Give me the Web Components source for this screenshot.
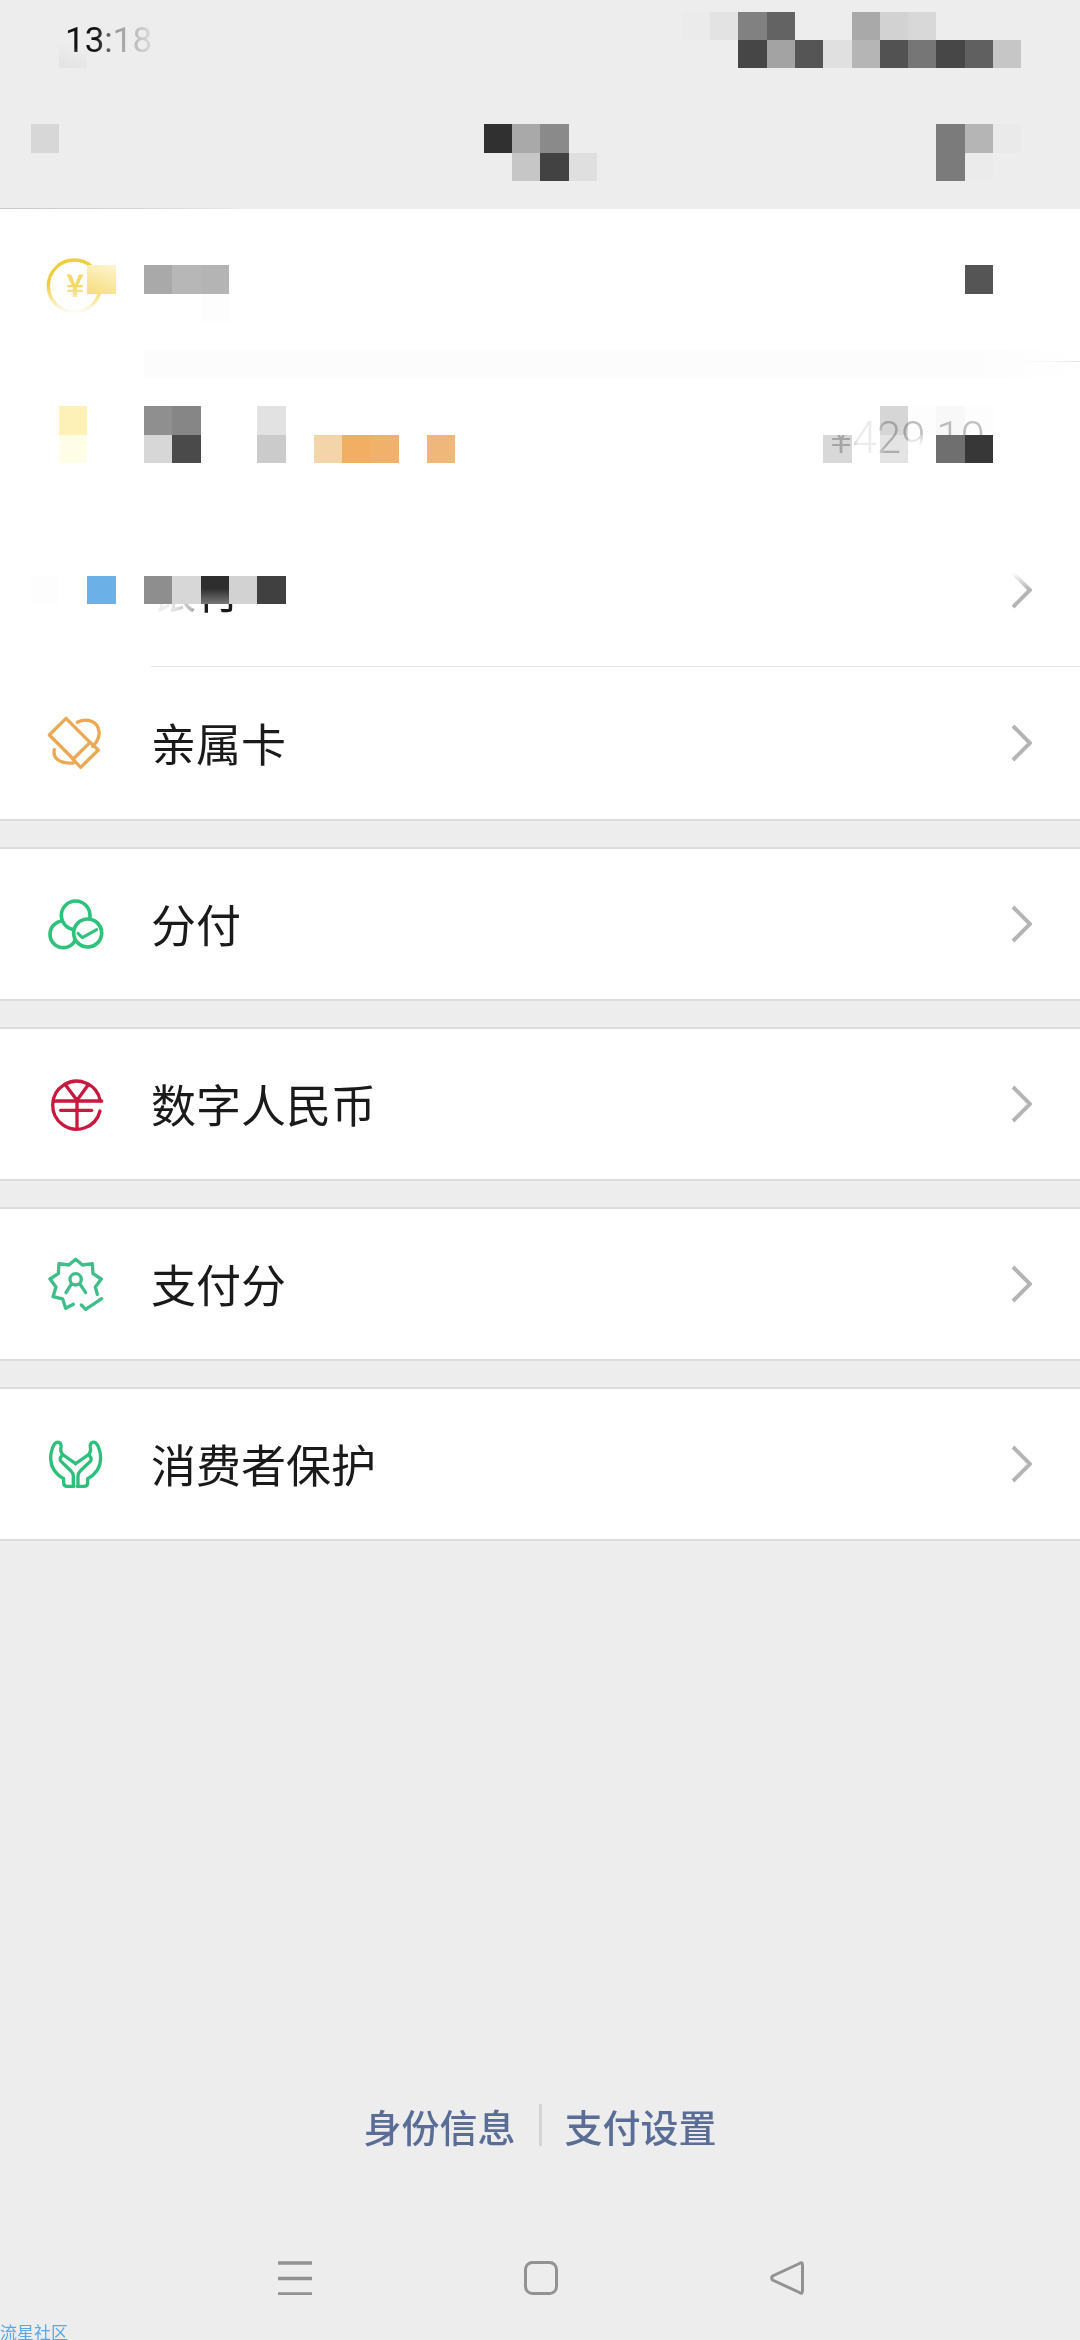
<!DOCTYPE html>
<html lang="zh">
<head>
<meta charset="utf-8">
<title>服务</title>
<style>
  html, body { margin: 0; padding: 0; }
  body {
    width: 1080px;
    height: 2340px;
    overflow: hidden;
    position: relative;
    display: flex;
    flex-direction: column;
    background: #ededed;
    font-family: "Noto Sans CJK SC", "Noto Sans", sans-serif;
  }
  svg.ic { display: block; width: 66.67px; height: 66.67px; fill: none; stroke-linecap: round; stroke-linejoin: round; }
  .coin { -webkit-mask-image: linear-gradient(#000 50%, transparent 92%); mask-image: linear-gradient(#000 50%, transparent 92%); }
  .ghost {
    display: inline-block;
    clip-path: inset(33px 0 0 0);
    -webkit-mask-image: linear-gradient(90deg, rgba(0,0,0,.08) 20%, rgba(0,0,0,.3) 45%, #000 60%);
    mask-image: linear-gradient(90deg, rgba(0,0,0,.08) 20%, rgba(0,0,0,.3) 45%, #000 60%);
  }
  .amount {
    display: inline-block;
    -webkit-mask-image: linear-gradient(90deg, #000 14%, rgba(0,0,0,.3) 18%, rgba(0,0,0,.35) 30%, #000 36%);
    mask-image: linear-gradient(90deg, #000 14%, rgba(0,0,0,.3) 18%, rgba(0,0,0,.35) 30%, #000 36%);
  }
</style>
</head>
<body>
  <status-head time="13:18"></status-head>

  <wallet-list>
    <wallet-row sep="fade-in">
      <svg slot="icon" class="ic coin" viewBox="60 60 200 200">
        <circle cx="163" cy="162" r="78" stroke="#efcf3f" stroke-width="10"/>
        <text x="165" y="195" text-anchor="middle" font-family="Noto Sans CJK SC, sans-serif" font-weight="700" font-size="92" fill="#f2d96a">¥</text>
      </svg>
    </wallet-row>
    <wallet-row>
      <span slot="value" class="amount">¥429.10</span>
    </wallet-row>
    <wallet-row sep="full" chevron="fade">
      <span slot="label" class="ghost">银行</span>
    </wallet-row>
    <wallet-row chevron="on">
      <svg slot="icon" class="ic" viewBox="60 60 200 200" stroke="#eca955" stroke-width="10">
        <path d="M138 88 L88 138 L160 210 L210 160 Z"/>
        <path d="M210 160 L235 183 L182 235 L160 212"/>
        <path d="M172 100 C195 88 225 92 235 118 C243 140 232 158 218 172"/>
        <path d="M103 182 C98 205 115 225 160 222"/>
      </svg>
      <span slot="label">亲属卡</span>
    </wallet-row>
  </wallet-list>

  <wallet-list gap>
    <wallet-row chevron="on" single>
      <svg slot="icon" class="ic" viewBox="60 60 200 200" stroke="#2fc27c" stroke-width="11">
        <circle cx="130" cy="190" r="40" fill="#fff"/>
        <circle cx="167" cy="133" r="43" fill="#fff"/>
        <circle cx="203" cy="186" r="42" fill="#fff"/>
        <path d="M174 187 L187 200 L230 176" stroke-width="9"/>
      </svg>
      <span slot="label">分付</span>
    </wallet-row>
  </wallet-list>

  <wallet-list gap>
    <wallet-row chevron="on" single>
      <svg slot="icon" class="ic" viewBox="60 60 200 200" stroke="#c8193e" stroke-width="10">
        <path d="M240 180 A72 72 0 1 1 241 150"/>
        <path d="M135 100 L171 148 L206 100"/>
        <path d="M100 150 H245"/>
        <path d="M122 178 H215"/>
        <path d="M171 150 V232"/>
      </svg>
      <span slot="label">数字人民币</span>
    </wallet-row>
  </wallet-list>

  <wallet-list gap>
    <wallet-row chevron="on" single>
      <svg slot="icon" class="ic" viewBox="60 60 200 200" stroke="#3fbd8a" stroke-width="10">
        <path d="M232 190 L226 168 L244 144 L219 128 L217 98 L187.5 102 L167 85 L146.5 102 L117 98 L115 128 L90 144 L108 168 L99 197 L128 204 L137 232 L160 220"/>
        <path d="M184 222 L197 235 L245 203"/>
        <circle cx="167" cy="145" r="17"/>
        <path d="M153 161 L138 185"/>
        <path d="M181 161 L197 185"/>
      </svg>
      <span slot="label">支付分</span>
    </wallet-row>
  </wallet-list>

  <wallet-list gap>
    <wallet-row chevron="on" single>
      <svg slot="icon" class="ic" viewBox="60 60 200 200" stroke="#2cc07c" stroke-width="10">
        <path d="M162 226 H142 Q131 226 131 215 V203 C108 190 92 172 92 140 C92 122 100 100 108 95 C116 91 125 96 123 108 C121 118 122 126 130 132 L167 158"/>
        <path d="M128 132 C120 138 118 146 124 152 L153 180 Q160 186 160 196 V226"/>
        <g transform="translate(334 0) scale(-1 1)">
          <path d="M162 226 H142 Q131 226 131 215 V203 C108 190 92 172 92 140 C92 122 100 100 108 95 C116 91 125 96 123 108 C121 118 122 126 130 132 L167 158"/>
          <path d="M128 132 C120 138 118 146 124 152 L153 180 Q160 186 160 196 V226"/>
        </g>
      </svg>
      <span slot="label">消费者保护</span>
    </wallet-row>
  </wallet-list>

  <foot-links>
    <span>身份信息</span>
    <span>支付设置</span>
  </foot-links>
  <nav-bar></nav-bar>

  <pixel-mosaic></pixel-mosaic>
  <water-mark>流星社区</water-mark>

<script>
'use strict';

class StatusHead extends HTMLElement {
  constructor() {
    super();
    this.attachShadow({ mode: 'open' });
    this.shadowRoot.innerHTML = `
      <style>
        :host { display: block; height: 209px; flex: none; padding: 19px 0 0 65px; box-sizing: border-box; position: relative; }
        .time {
          font: 400 35px/44px Roboto, sans-serif;
          color: #111;
          display: inline-block;
          -webkit-mask-image: linear-gradient(90deg, #000 35%, rgba(0,0,0,.35) 62%, rgba(0,0,0,.08) 100%);
          mask-image: linear-gradient(90deg, #000 35%, rgba(0,0,0,.35) 62%, rgba(0,0,0,.08) 100%);
        }
        .edge { position: absolute; left: 0; right: 0; bottom: 0; height: 1.5px; background: linear-gradient(90deg, #c8c8c8, #d8d8d8 15%, transparent 23%); }
      </style>
      <span class="time"></span><div class="edge"></div>`;
  }

  connectedCallback() {
    this.shadowRoot.querySelector('.time').textContent = this.getAttribute('time');
  }
}

class WalletList extends HTMLElement {
  constructor() {
    super();
    this.attachShadow({ mode: 'open' });
    this.shadowRoot.innerHTML = `
      <style>
        :host { display: block; flex: none; background: #fff; border-bottom: 2px solid #dcdcdc; }
        :host([gap]) { margin-top: 26px; border-top: 2px solid #dcdcdc; }
      </style>
      <slot></slot>`;
  }
}

class WalletRow extends HTMLElement {
  constructor() {
    super();
    this.attachShadow({ mode: 'open' });
    this.shadowRoot.innerHTML = `
      <style>
        :host { display: grid; grid-template-columns: 151px 1fr; height: 152.5px; }
        :host([single]) { height: 150px; }
        .icon { display: flex; align-items: center; padding-left: 40px; }
        .body {
          display: flex;
          align-items: center;
          justify-content: space-between;
          padding-right: 48px;
          box-sizing: border-box;
          min-width: 0;
        }
        :host([sep="full"]) .body { border-bottom: 1.5px solid #e6e6e6; }
        :host([sep="fade-in"]) .body {
          border-bottom: 1.5px solid;
          border-image: linear-gradient(90deg, transparent 93%, #e4e4e4 100%) 1;
        }
        .label { font-size: 45px; line-height: 60px; color: #1a1a1a; }
        .end { display: flex; align-items: center; }
        .value { font: 300 44px/60px Roboto, sans-serif; color: #c2c2c2; margin-right: 47px; }
        svg { display: none; width: 21px; height: 38px; fill: none; stroke: #b4b4b4; stroke-width: 4; }
        :host([chevron]) svg { display: block; }
        :host([chevron]) .value { display: none; }
        :host([chevron="fade"]) svg {
          -webkit-mask-image: linear-gradient(transparent 5%, #000 48%);
          mask-image: linear-gradient(transparent 5%, #000 48%);
        }
      </style>
      <div class="icon"><slot name="icon"></slot></div>
      <div class="body">
        <div class="label"><slot name="label"></slot></div>
        <div class="end">
          <div class="value"><slot name="value"></slot></div>
          <svg viewBox="0 0 21 38"><path d="M2 2 L19 19 L2 36"/></svg>
        </div>
      </div>`;
  }
}

class FootLinks extends HTMLElement {
  constructor() {
    super();
    this.attachShadow({ mode: 'open' });
    this.shadowRoot.innerHTML = `
      <style>
        :host {
          display: flex;
          flex: none;
          margin-top: auto;
          height: 174px;
          padding-bottom: 4px;
          align-items: center;
          justify-content: center;
          gap: 23px;
          font-size: 38px;
          font-weight: 500;
          color: #5a6d96;
        }
        i { display: block; width: 3px; height: 42px; background: #d4d4d4; }
      </style>
      <slot name="a"></slot><i></i><slot name="b"></slot>`;
  }

  connectedCallback() {
    const links = this.querySelectorAll('span');
    links[0].slot = 'a';
    links[1].slot = 'b';
  }
}

class NavBar extends HTMLElement {
  constructor() {
    super();
    this.attachShadow({ mode: 'open' });
    this.shadowRoot.innerHTML = `
      <style>
        :host {
          display: flex;
          flex: none;
          height: 124px;
          align-items: center;
          justify-content: center;
          gap: 212px;
          padding-left: 2px;
          box-sizing: border-box;
        }
        svg { display: block; width: 34px; height: 34px; fill: none; stroke: #929292; stroke-width: 3; stroke-linejoin: round; }
      </style>
      <svg viewBox="0 0 34 34"><path d="M0 2 H34 M0 17.5 H34 M0 33 H34" stroke-width="3.6"/></svg>
      <svg viewBox="0 0 34 34"><rect x="1.5" y="1.5" width="31" height="31" rx="7"/></svg>
      <svg viewBox="0 0 34 34"><path d="M29.5 2.5 Q32.5 0.5 32.5 4 V30 Q32.5 33.5 29.5 31.5 L2.500 19 Q1 17 2.5 15 Z"/></svg>`;
  }
}

// 马赛克：col/row 是格子坐标，第四项为 1 时透出下面的文字
const BLOCKS = [
  [24, 0, '#ebebeb'], [25, 0, '#e3e3e3'], [26, 0, '#818181'], [27, 0, '#636363'],
  [30, 0, '#a9a9a9'], [31, 0, '#d2d2d2'], [32, 0, '#d8d8d8'],
  [2, 1, 'linear-gradient(20deg,#e2e2e2,transparent 70%)'],
  [26, 1, '#464646'], [27, 1, '#a3a3a3'], [28, 1, '#555'], [29, 1, '#e0e0e0'], [30, 1, '#b5b5b5'],
  [31, 1, '#525252'], [32, 1, '#767676'], [33, 1, '#474747'], [34, 1, '#606060'], [35, 1, '#c6c6c6'],

  [1, 4, '#d7d7d7'], [17, 4, '#303030'], [18, 4, '#a9a9a9'], [19, 4, '#8a8a8a'],
  [33, 4, '#7b7b7b'], [34, 4, '#b5b5b5'], [35, 4, '#eaeaea'],
  [18, 5, '#c6c6c6'], [19, 5, '#424242'], [20, 5, '#dfdfdf'], [33, 5, '#7b7b7b'], [34, 5, '#ebebeb'],

  [3, 9, 'linear-gradient(200deg,#fdf5d2,#f7dd7a)'],
  [5, 9, '#a9a9a9'], [6, 9, '#b7b7b7'], [7, 9, '#b4b4b4'], [34, 9, '#555'],
  [7, 10, '#fdfdfd'],

  [2, 14, '#fdf1b8'], [5, 14, '#8f8f8f'], [6, 14, '#868686'], [9, 14, '#e2e2e2'],
  [29, 14, '#fff'],
  [31, 14, '#d6d6d6', 1], [32, 14, '#fdfdfd', 1], [33, 14, '#f8f8f8', 1], [34, 14, '#fdfdfd', 1],
  [2, 15, '#fffce8'], [5, 15, '#d7d7d7'], [6, 15, '#4a4a4a'], [9, 15, '#cbcbcb'],
  [11, 15, '#f4d5a9'], [12, 15, '#f2ae63'], [13, 15, '#f0b26b'], [15, 15, '#efb87a'],
  [29, 15, '#d8d8d8', 1], [31, 15, '#e4e4e4', 1],
  [32, 15, 'linear-gradient(rgba(255,255,255,.3),#fff 45%)'],
  [33, 15, '#6f6f6f'], [34, 15, '#373737'],

  [1, 20, '#fdfdfd'], [3, 20, '#6bb0e6'], [5, 20, '#8e8e8e'], [6, 20, '#d7d7d7'],
  [7, 20, 'linear-gradient(#2e2e2e 45%,#777)'], [8, 20, '#d2d2d2'], [9, 20, '#404040'],
];

class PixelMosaic extends HTMLElement {
  constructor() {
    super();
    this.attachShadow({ mode: 'open' });
    this.shadowRoot.innerHTML = `
      <style>
        :host { position: absolute; left: 0; top: 0; width: 1080px; height: 700px; pointer-events: none; }
        b { position: absolute; display: block; }
        b.m { mix-blend-mode: multiply; }
        .band { position: absolute; left: 144px; top: 350px; width: 936px; height: 28px;
          background: linear-gradient(90deg, #fcfcfc 88%, transparent 100%); }
      </style>
      <div class="band"></div>`;
  }

  connectedCallback() {
    BLOCKS.forEach(([col, row, paint, blend]) => {
      const block = document.createElement('b');
      const left = Math.round(2.5 + 28.3 * col);
      const top = Math.round(11.5 + 28.2 * row);
      block.style.left = left + 'px';
      block.style.top = top + 'px';
      block.style.width = Math.round(2.5 + 28.3 * (col + 1)) - left + 'px';
      block.style.height = Math.round(11.5 + 28.2 * (row + 1)) - top + 'px';
      block.style.background = paint;
      if (blend) block.className = 'm';
      this.shadowRoot.appendChild(block);
    });
  }
}

class WaterMark extends HTMLElement {
  constructor() {
    super();
    this.attachShadow({ mode: 'open' });
    this.shadowRoot.innerHTML = `
      <style>
        :host { position: absolute; left: 0; bottom: 0; font-size: 17px; line-height: 17px; color: #5aa8ea; }
      </style>
      <slot></slot>`;
  }
}

window.customElements.define('status-head', StatusHead);
window.customElements.define('wallet-list', WalletList);
window.customElements.define('wallet-row', WalletRow);
window.customElements.define('foot-links', FootLinks);
window.customElements.define('nav-bar', NavBar);
window.customElements.define('pixel-mosaic', PixelMosaic);
window.customElements.define('water-mark', WaterMark);
</script>
</body>
</html>
